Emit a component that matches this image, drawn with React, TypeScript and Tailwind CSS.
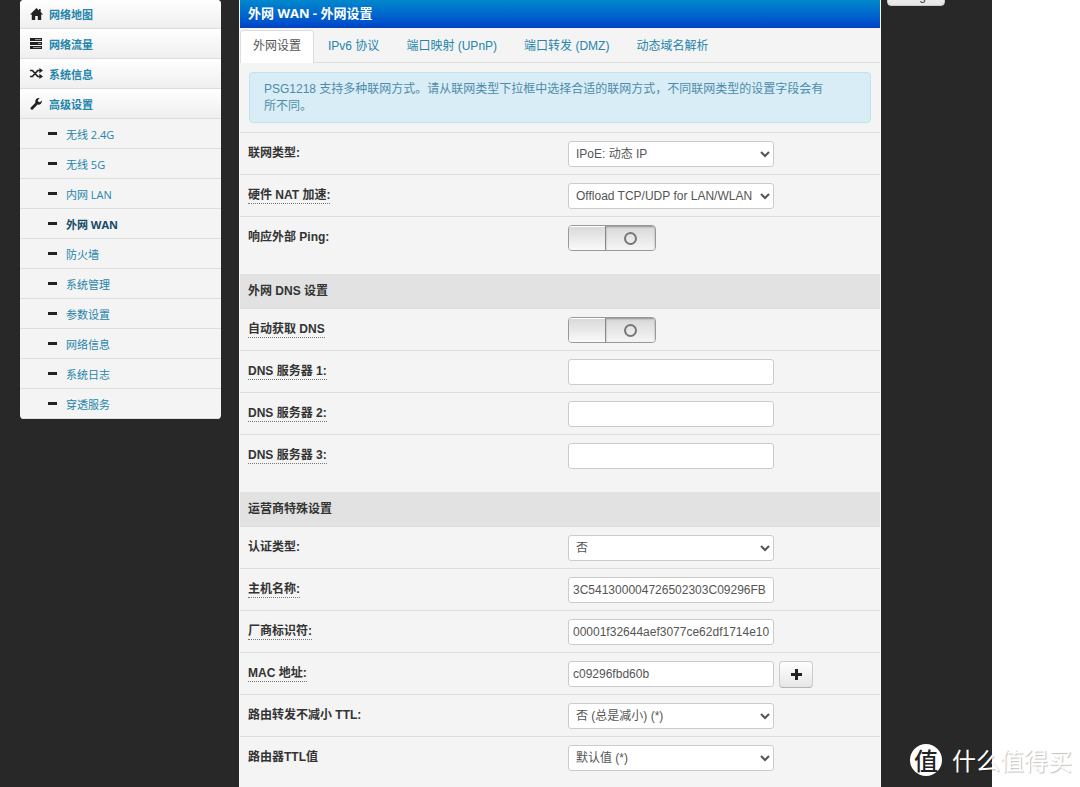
import React, { useState } from "react";

type FieldProps = {
  id: string;
  label: string;
  hint?: boolean;
  last?: boolean;
  children: React.ReactNode;
};

const HomeIcon = () => (
  <svg width="13" height="12" viewBox="0 0 13 12" aria-hidden>
    <path fill="currentColor" d="M6.5 0L9 2.4V1h1.7v3L13 6.4h-1.8V12H7.8V8H5.2v4H1.8V6.4H0z" />
  </svg>
);

const TasksIcon = () => (
  <svg width="12" height="11" viewBox="0 0 12 11" aria-hidden>
    <path fill="#999999" d="M1 1h10v1H1zM1 5h10v1H1zM1 9h10v1H1z" />
    <path
      fill="currentColor"
      fillRule="evenodd"
      d="M0 0h12v3H0zM5 1v1h6v-1zM0 4h12v3H0zM8 5v1h3v-1zM0 8h12v3H0zM3 9v1h8v-1z"
    />
  </svg>
);

const ShuffleIcon = () => (
  <svg width="13" height="11" viewBox="0 0 13 11" aria-hidden>
    <path
      fill="none"
      stroke="currentColor"
      strokeWidth="1.7"
      d="M0 2.5h2.4L7.8 8.5H10M0 8.5h2.4L7.8 2.5H10"
    />
    <path fill="currentColor" d="M9.4 0L13 2.5 9.4 5.2zM9.4 5.8L13 8.5 9.4 11z" />
  </svg>
);

const WrenchIcon = () => (
  <svg width="12" height="12" viewBox="0 0 12 12" aria-hidden>
    <path
      fill="currentColor"
      d="M9.6 0.2L7.8 2l0.5 1.8 1.7 0.4 1.8-1.8c0.6 2.6-1.6 4.7-4.2 4.2L2.8 11.4c-1.3 1.2-3.2-0.8-2-2L5.4 4.8C4.6 2 6.8-0.4 9.6 0.2z"
    />
  </svg>
);

const PlusIcon = () => (
  <svg width="11" height="11" viewBox="0 0 11 11" aria-hidden>
    <path fill="currentColor" d="M4 0h3v4h4v3H7v4H4V7H0V4h4z" />
  </svg>
);

const mainMenu = [
  { label: "网络地图", icon: <HomeIcon /> },
  { label: "网络流量", icon: <TasksIcon /> },
  { label: "系统信息", icon: <ShuffleIcon /> },
  { label: "高级设置", icon: <WrenchIcon /> },
];

const subMenu = [
  "无线 2.4G",
  "无线 5G",
  "内网 LAN",
  "外网 WAN",
  "防火墙",
  "系统管理",
  "参数设置",
  "网络信息",
  "系统日志",
  "穿透服务",
];

const tabs = ["外网设置", "IPv6 协议", "端口映射 (UPnP)", "端口转发 (DMZ)", "动态域名解析"];

const controlClass =
  "block h-[26px] w-[206px] rounded-[3px] border border-[#cccccc] bg-white text-[12px] text-[#555555] outline-none focus:border-[#52a8ec]";

function Sidebar() {
  return (
    <nav className="w-[201px] shrink-0 self-start overflow-hidden rounded-[4px] bg-[#f4f4f4] font-['Open_Sans','Noto_Sans_CJK_SC',sans-serif] text-[11px] leading-4">
      <ul className="-mt-px">
        {mainMenu.map((item) => (
          <li key={item.label}>
            <a
              href="#"
              className="flex h-[30px] items-center border-b border-[#dddddd] bg-linear-to-b from-white to-[#efefef] pl-[10px] font-bold text-[#2585ab]"
            >
              <span className="flex w-[19px] text-[#222222]">{item.icon}</span>
              <span className="pt-[2px]">{item.label}</span>
            </a>
          </li>
        ))}
        {subMenu.map((label) => (
          <li key={label}>
            <a
              href="#"
              className={[
                "flex h-[30px] items-center border-b border-[#dddddd] pl-[28px]",
                label === "外网 WAN" ? "font-bold text-[#144b66]" : "text-[#2585ab]",
              ].join(" ")}
            >
              <span className="mr-[9px] h-[3px] w-[9px] bg-[#222222]" />
              <span className="pt-[2px]">{label}</span>
            </a>
          </li>
        ))}
      </ul>
    </nav>
  );
}

function Field({ id, label, hint, last, children }: FieldProps) {
  return (
    <div
      className={[
        "grid grid-cols-2 border-t border-[#dddddd]",
        last ? "h-[58px]" : "h-[42px]",
      ].join(" ")}
    >
      <div className="px-2 pt-3 font-bold text-[#333333]">
        <label
          htmlFor={id}
          className={[
            "inline-block leading-4",
            hint ? "border-b border-dotted border-[#777777]" : "",
          ].join(" ")}
        >
          {label}
        </label>
      </div>
      <div className="flex items-start gap-[5px] px-2 pt-2">{children}</div>
    </div>
  );
}

function SectionTitle({ children }: { children: React.ReactNode }) {
  return (
    <h2 className="flex h-[34px] items-center bg-[#e2e2e2] px-2 font-bold text-[#333333]">
      {children}
    </h2>
  );
}

function SelectBox({ id, value }: { id: string; value: string }) {
  return (
    <select id={id} className={`${controlClass} px-[3px]`}>
      <option>{value}</option>
    </select>
  );
}

function TextBox({ id, value = "" }: { id: string; value?: string }) {
  return <input id={id} type="text" defaultValue={value} className={`${controlClass} px-1`} />;
}

function Toggle({ id }: { id: string }) {
  const [on, setOn] = useState(false);
  return (
    <label
      htmlFor={id}
      className={[
        "relative flex h-[26px] w-[88px] cursor-pointer overflow-hidden rounded-[4px] border border-[#999999]",
        on ? "flex-row-reverse" : "",
      ].join(" ")}
    >
      <input
        id={id}
        type="checkbox"
        role="switch"
        checked={on}
        onChange={(e) => setOn(e.target.checked)}
        className="sr-only"
      />
      <span className="w-[37px] border-r border-[#888888] bg-linear-to-b from-[#d8d8d8] to-[#fafafa] shadow-[inset_0_1px_0_#ffffff]" />
      <span className="flex flex-1 items-center justify-center bg-linear-to-b from-[#d8d8d8] to-[#f6f6f6] shadow-[inset_0_1px_2px_rgba(0,0,0,0.35)]">
        <span className="h-[13px] w-[13px] rounded-full border-2 border-[#777777]" />
      </span>
    </label>
  );
}

export default function App() {
  const [activeTab, setActiveTab] = useState(tabs[0]);

  return (
    <div className="relative flex min-h-screen overflow-hidden bg-white pr-[88px] font-['Liberation_Sans','Noto_Sans_CJK_SC',sans-serif] text-[12px] leading-[17px]">
      <div className="flex flex-1 bg-[#282828] pl-5">
        <Sidebar />

        <main className="ml-[18px] min-w-0 flex-1 border-x border-[#fafafa] bg-[#f4f4f4] pb-2">
          <h1 className="flex h-[28px] items-center border-b border-[#0a45a8] bg-linear-to-b from-[#0088cc] to-[#0044cc] px-2 font-['Open_Sans','Noto_Sans_CJK_SC',sans-serif] text-[13px] font-bold text-white">
            外网 WAN - 外网设置
          </h1>

          <div role="tablist" className="flex gap-px border-b border-[#dddddd] pt-[2px]">
            {tabs.map((tab) => (
              <button
                key={tab}
                type="button"
                role="tab"
                aria-selected={tab === activeTab}
                onClick={() => setActiveTab(tab)}
                className={[
                  "-mb-px h-[33px] rounded-t-[4px] border border-b-0 px-3 pb-[2px]",
                  tab === activeTab
                    ? "border-[#dddddd] bg-white text-[#555555]"
                    : "border-transparent text-[#2585ab]",
                ].join(" ")}
              >
                {tab}
              </button>
            ))}
          </div>

          <div className="mx-[9px] my-[9px] rounded-[4px] border border-[#bfe3ea] bg-[#d9edf7] pt-2 pr-[38px] pb-[7px] pl-[14px] text-[#4f8ba8]">
            PSG1218 支持多种联网方式。请从联网类型下拉框中选择合适的联网方式，不同联网类型的设置字段会有所不同。
          </div>

          <form onSubmit={(e) => e.preventDefault()}>
            <Field id="wan_proto" label="联网类型:">
              <SelectBox id="wan_proto" value="IPoE: 动态 IP" />
            </Field>
            <Field id="hw_nat" label="硬件 NAT 加速:" hint>
              <SelectBox id="hw_nat" value="Offload TCP/UDP for LAN/WLAN" />
            </Field>
            <Field id="wan_ping" label="响应外部 Ping:" last>
              <Toggle id="wan_ping" />
            </Field>

            <SectionTitle>外网 DNS 设置</SectionTitle>
            <Field id="dns_auto" label="自动获取 DNS" hint>
              <Toggle id="dns_auto" />
            </Field>
            <Field id="dns1" label="DNS 服务器 1:" hint>
              <TextBox id="dns1" />
            </Field>
            <Field id="dns2" label="DNS 服务器 2:" hint>
              <TextBox id="dns2" />
            </Field>
            <Field id="dns3" label="DNS 服务器 3:" hint last>
              <TextBox id="dns3" />
            </Field>

            <SectionTitle>运营商特殊设置</SectionTitle>
            <Field id="auth_mode" label="认证类型:">
              <SelectBox id="auth_mode" value="否" />
            </Field>
            <Field id="hostname" label="主机名称:" hint>
              <TextBox id="hostname" value="3C541300004726502303C09296FB" />
            </Field>
            <Field id="vendor_id" label="厂商标识符:" hint>
              <TextBox id="vendor_id" value="00001f32644aef3077ce62df1714e10" />
            </Field>
            <Field id="mac" label="MAC 地址:" hint>
              <TextBox id="mac" value="c09296fbd60b" />
              <button
                type="button"
                aria-label="MAC"
                className="flex h-[27px] w-[34px] items-center justify-center rounded-[4px] border border-[#cccccc] border-b-[#b3b3b3] bg-linear-to-b from-white to-[#e6e6e6] text-[#222222]"
              >
                <PlusIcon />
              </button>
            </Field>
            <Field id="ttl_fix" label="路由转发不减小 TTL:">
              <SelectBox id="ttl_fix" value="否 (总是减小) (*)" />
            </Field>
            <Field id="ttl_value" label="路由器TTL值">
              <SelectBox id="ttl_value" value="默认值 (*)" />
            </Field>
          </form>
        </main>

        <div className="w-[111px] shrink-0 pl-[6px]">
          <button
            type="button"
            className="-mt-5 flex h-[26px] w-[58px] items-end justify-center rounded-[4px] border border-[#cccccc] bg-linear-to-b from-white to-[#e6e6e6] text-[#333333]"
          >
            Log
          </button>
        </div>
      </div>

      {/* site mark */}
      <div className="pointer-events-none absolute right-2 bottom-[11px] flex items-center gap-[10px] font-['Noto_Sans_CJK_SC',sans-serif] text-white">
        <span className="flex h-8 w-8 items-center justify-center rounded-full bg-white text-[24px] leading-8 font-medium text-[#222222]">
          值
        </span>
        <span className="text-[24px] leading-8 [text-shadow:1px_1px_1px_rgba(0,0,0,0.25)]">
          什么值得买
        </span>
      </div>
    </div>
  );
}
